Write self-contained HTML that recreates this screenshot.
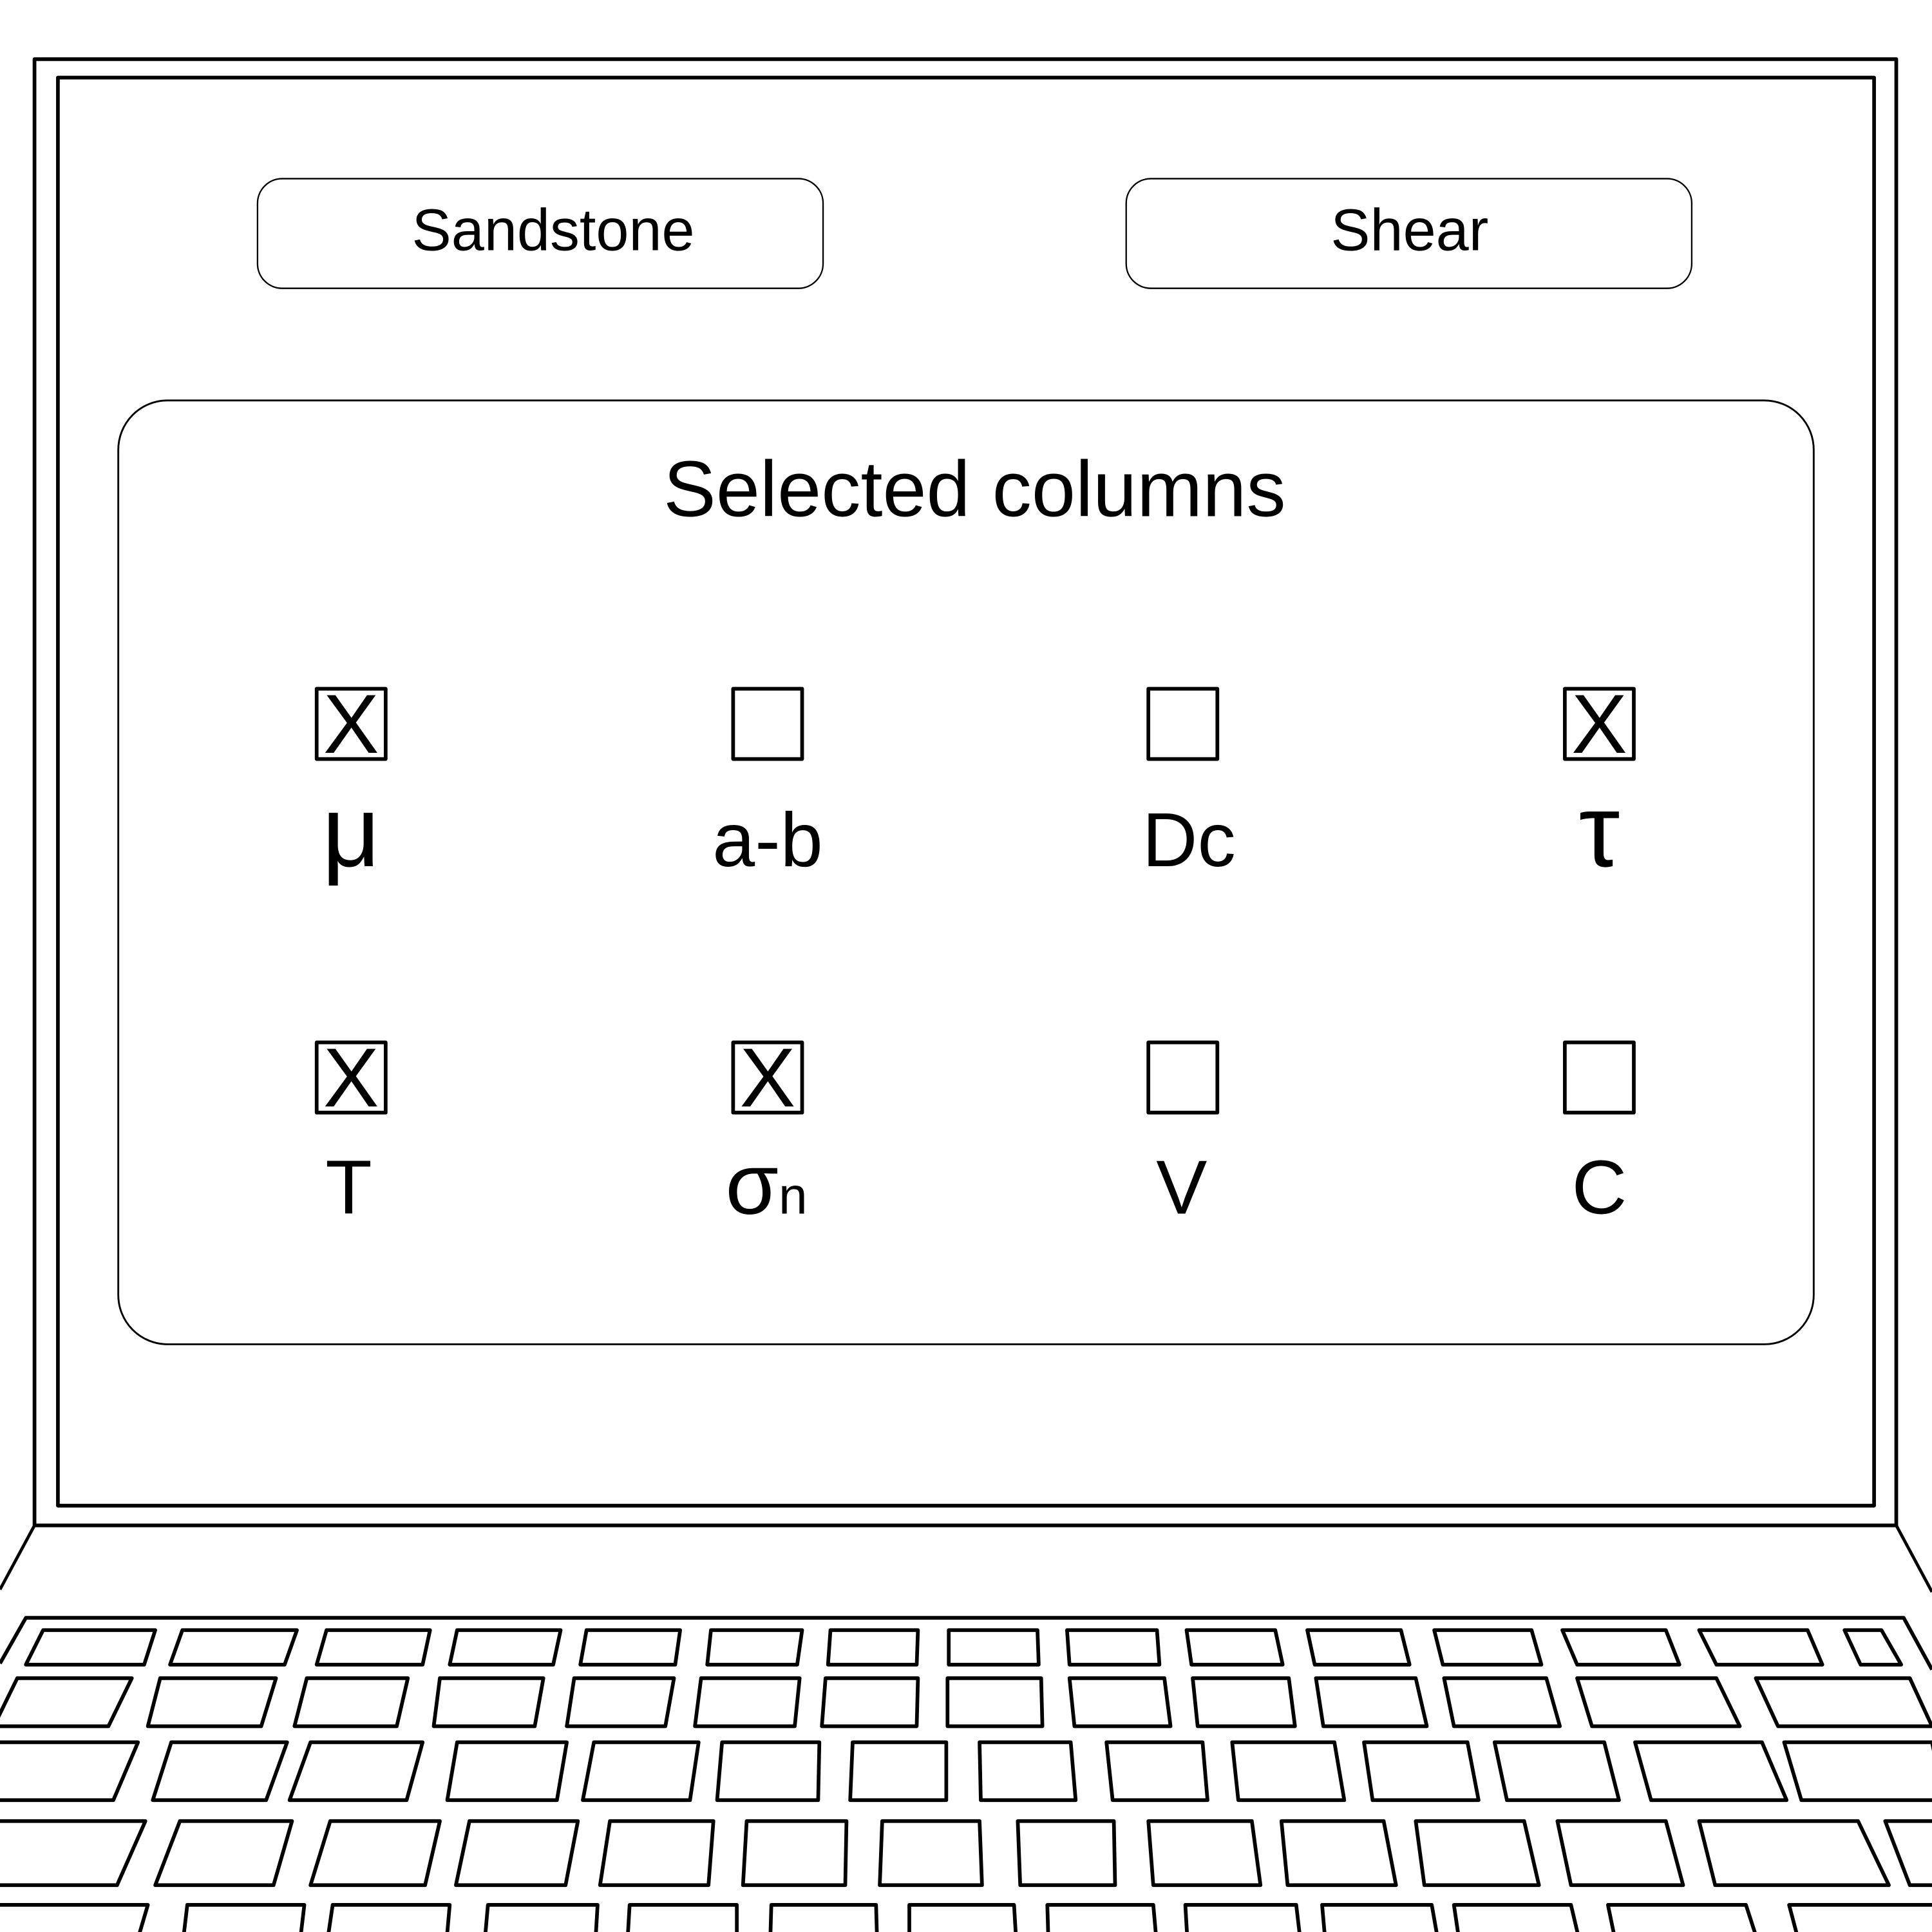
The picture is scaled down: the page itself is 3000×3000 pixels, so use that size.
<!DOCTYPE html>
<html><head><meta charset="utf-8"><style>html,body{margin:0;padding:0;background:#fff}svg{display:block}</style></head>
<body>
<svg width="3000" height="3000" viewBox="0 0 1568 1568" xmlns="http://www.w3.org/2000/svg" font-family="'Liberation Sans', 'DejaVu Sans', sans-serif">
<rect width="1568" height="1568" fill="#fff"/>
<g fill="none" stroke="#000" stroke-linejoin="round">
<rect x="28" y="48" width="1511" height="1190" stroke-width="3"/>
<rect x="47" y="63" width="1474" height="1159" stroke-width="3"/>
<path d="M28 1238 L0 1290 M1539 1238 L1568 1292" stroke-width="2.5"/>
<path d="M0 1350 L21 1313 L1545 1313 L1568 1355" stroke-width="3"/>
<rect x="209" y="145" width="459" height="89" rx="20" stroke-width="1.2"/>
<rect x="914" y="145" width="459" height="89" rx="20" stroke-width="1.2"/>
<rect x="96" y="325" width="1376" height="766" rx="40" stroke-width="1.5"/>
<g stroke-width="3">
<rect x="257" y="559" width="56" height="57"/><rect x="595" y="559" width="56" height="57"/>
<rect x="932" y="559" width="56" height="57"/><rect x="1270" y="559" width="56" height="57"/>
<rect x="257" y="846" width="56" height="57"/><rect x="595" y="846" width="56" height="57"/>
<rect x="932" y="846" width="56" height="57"/><rect x="1270" y="846" width="56" height="57"/>
</g>
<g stroke-width="3">
<path d="M35 1323H126L117 1351H21Z"/><path d="M148 1323H241L231 1351H138Z"/>
<path d="M265 1323H349L343 1351H257Z"/><path d="M371 1323H455L449 1351H365Z"/>
<path d="M476 1323H552L548 1351H471Z"/><path d="M577 1323H651L647 1351H574Z"/>
<path d="M674 1323H745L744 1351H672Z"/><path d="M770 1323H842L843 1351H770Z"/>
<path d="M866 1323H939L941 1351H868Z"/><path d="M963 1323H1035L1041 1351H967Z"/>
<path d="M1061 1323H1137L1144 1351H1067Z"/><path d="M1164 1323H1243L1251 1351H1171Z"/>
<path d="M1268 1323H1352L1363 1351H1280Z"/><path d="M1379 1323H1467L1479 1351H1393Z"/>
<path d="M1497 1323H1527L1543 1351H1510Z"/>
<path d="M14 1362H107L88 1401H-5Z"/><path d="M130 1362H224L212 1401H120Z"/>
<path d="M249 1362H331L322 1401H239Z"/><path d="M357 1362H441L434 1401H352Z"/>
<path d="M466 1362H547L540 1401H460Z"/><path d="M569 1362H649L645 1401H564Z"/>
<path d="M670 1362H745L744 1401H667Z"/><path d="M769 1362H845L846 1401H769Z"/>
<path d="M868 1362H945L950 1401H872Z"/><path d="M968 1362H1046L1051 1401H972Z"/>
<path d="M1068 1362H1149L1158 1401H1074Z"/><path d="M1172 1362H1255L1266 1401H1180Z"/>
<path d="M1280 1362H1393L1412 1401H1292Z"/><path d="M1425 1362H1550L1568 1401H1443Z"/>
<path d="M-10 1414H112L92 1461H-10Z"/><path d="M139 1414H233L216 1461H124Z"/>
<path d="M252 1414H343L330 1461H235Z"/><path d="M371 1414H460L452 1461H363Z"/>
<path d="M482 1414H567L560 1461H473Z"/><path d="M586 1414H665L664 1461H582Z"/>
<path d="M692 1414H768L768 1461H690Z"/><path d="M795 1414H869L873 1461H796Z"/>
<path d="M898 1414H976L980 1461H903Z"/><path d="M1000 1414H1083L1091 1461H1005Z"/>
<path d="M1107 1414H1191L1200 1461H1114Z"/><path d="M1213 1414H1302L1314 1461H1223Z"/>
<path d="M1327 1414H1430L1450 1461H1340Z"/><path d="M1448 1414H1568L1578 1461H1462Z"/>
<path d="M-10 1478H118L95 1530H-10Z"/><path d="M146 1478H237L222 1530H126Z"/>
<path d="M268 1478H357L345 1530H252Z"/><path d="M381 1478H469L459 1530H370Z"/>
<path d="M495 1478H579L575 1530H487Z"/><path d="M606 1478H687L686 1530H603Z"/>
<path d="M716 1478H795L797 1530H714Z"/><path d="M826 1478H904L905 1530H828Z"/>
<path d="M932 1478H1016L1023 1530H936Z"/><path d="M1040 1478H1123L1133 1530H1045Z"/>
<path d="M1149 1478H1237L1249 1530H1156Z"/><path d="M1264 1478H1352L1366 1530H1275Z"/>
<path d="M1379 1478H1508L1533 1530H1392Z"/><path d="M1530 1478H1578L1590 1530H1550Z"/>
<path d="M-10 1546H120L110 1580M148 1580L152 1546H247L243 1580M265 1580L270 1546H365L362 1580M393 1580L396 1546H485L483 1580M509 1580L511 1546H598L598 1580M625 1580L626 1546H711L712 1580M738 1580L738 1546H823L825 1580M851 1580L850 1546H936L939 1580M964 1580L962 1546H1052L1056 1580M1076 1580L1073 1546H1162L1168 1580M1185 1580L1180 1546H1275L1283 1580M1312 1580L1305 1546H1417L1428 1580M1461 1580L1452 1546H1578"/>
</g>
</g>
<g fill="#000" text-anchor="middle">
<text x="449" y="203" font-size="48">Sandstone</text>
<text x="1144" y="203" font-size="48">Shear</text>
<text x="791" y="419" font-size="64">Selected columns</text>
<g font-size="68">
<text x="285" y="611">X</text><text x="1298" y="611">X</text>
<text x="285" y="898">X</text><text x="623" y="898">X</text>
</g>
<text x="285" y="703" font-size="82">μ</text>
<text x="623" y="703" font-size="62">a-b</text>
<text x="965" y="703" font-size="62">Dc</text>
<text x="1298" y="703" font-size="84">τ</text>
<text x="283" y="985" font-size="62">T</text>
<text x="622" y="985"><tspan font-size="70">σ</tspan><tspan font-size="42">n</tspan></text>
<text x="959" y="985" font-size="62">V</text>
<text x="1298" y="985" font-size="62">C</text>
</g>
</svg>
</body></html>
